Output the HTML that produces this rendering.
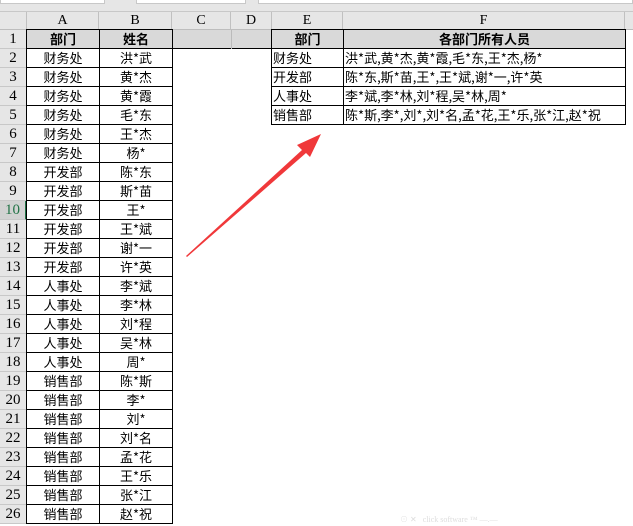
<!DOCTYPE html>
<html><head><meta charset="utf-8"><style>
body{margin:0;width:633px;height:526px;overflow:hidden;background:#fff;position:relative;font-family:"Liberation Serif","Noto Serif CJK SC","Noto Sans CJK SC",serif;font-size:13px;color:#000}
.a{position:absolute;box-sizing:border-box;line-height:18px;white-space:nowrap}
.top{left:0;top:0;width:633px;height:12px;background:#e6e6e6;border-bottom:1px solid #c8c8c8}
.ch{top:12px;height:18px;background:#e6e6e6;border-right:1px solid #c0c0c0;border-bottom:1px solid #bdbdbd;text-align:center;font-size:14px}
.rh{left:0;width:27px;height:19px;background:#e6e6e6;border-right:1px solid #bdbdbd;border-bottom:1px solid #c8c8c8;text-align:center;font-size:15px;font-family:"Liberation Serif",serif}
.c{height:20px;border:1px solid #000;text-align:center;font-family:"Noto Sans CJK SC",sans-serif;font-size:13px;line-height:18px}
.l{text-align:left;padding-left:1px}
.h{background:#d9d9d9;font-weight:bold}
</style></head><body>
<div class="a top"></div>
<div class="a" style="left:0;top:0;width:105px;height:4px;background:#fff;border:1px solid #c8c8c8;border-top:0"></div>
<div class="a" style="left:136px;top:0;width:110px;height:4px;background:#fff;border:1px solid #c8c8c8;border-top:0"></div>
<div class="a" style="left:258px;top:0;width:375px;height:4px;background:#fff;border:1px solid #c8c8c8;border-top:0"></div>
<div class="a ch" style="left:0;width:27px"></div>
<div class="a ch" style="left:27px;width:72px">A</div>
<div class="a ch" style="left:99px;width:73px">B</div>
<div class="a ch" style="left:172px;width:59px">C</div>
<div class="a ch" style="left:231px;width:41px">D</div>
<div class="a ch" style="left:272px;width:71px">E</div>
<div class="a ch" style="left:343px;width:282px">F</div>
<div class="a ch" style="left:625px;width:8px;border-right:0"></div>
<div class="a" style="left:172px;top:30px;width:100px;height:19px;background:#d9d9d9;border-bottom:1px solid #000;border-right:1px solid #bbb"></div>
<div class="a" style="left:231px;top:30px;width:1px;height:19px;background:#bbb"></div>

<div class="a rh" style="top:30px">1</div><div class="a rh" style="top:49px">2</div><div class="a rh" style="top:68px">3</div><div class="a rh" style="top:87px">4</div><div class="a rh" style="top:106px">5</div><div class="a rh" style="top:125px">6</div><div class="a rh" style="top:144px">7</div><div class="a rh" style="top:163px">8</div><div class="a rh" style="top:182px">9</div><div class="a rh" style="top:201px;background:#d2d2d2;color:#217346;border-right:2px solid #217346">10</div><div class="a rh" style="top:220px">11</div><div class="a rh" style="top:239px">12</div><div class="a rh" style="top:258px">13</div><div class="a rh" style="top:277px">14</div><div class="a rh" style="top:296px">15</div><div class="a rh" style="top:315px">16</div><div class="a rh" style="top:334px">17</div><div class="a rh" style="top:353px">18</div><div class="a rh" style="top:372px">19</div><div class="a rh" style="top:391px">20</div><div class="a rh" style="top:410px">21</div><div class="a rh" style="top:429px">22</div><div class="a rh" style="top:448px">23</div><div class="a rh" style="top:467px">24</div><div class="a rh" style="top:486px">25</div><div class="a rh" style="top:505px">26</div>

<div class="a c h" style="left:26px;top:29px;width:74px">部门</div><div class="a c h" style="left:99px;top:29px;width:74px">姓名</div>
<div class="a c" style="left:26px;top:48px;width:74px">财务处</div><div class="a c" style="left:99px;top:48px;width:74px">洪*武</div>
<div class="a c" style="left:26px;top:67px;width:74px">财务处</div><div class="a c" style="left:99px;top:67px;width:74px">黄*杰</div>
<div class="a c" style="left:26px;top:86px;width:74px">财务处</div><div class="a c" style="left:99px;top:86px;width:74px">黄*霞</div>
<div class="a c" style="left:26px;top:105px;width:74px">财务处</div><div class="a c" style="left:99px;top:105px;width:74px">毛*东</div>
<div class="a c" style="left:26px;top:124px;width:74px">财务处</div><div class="a c" style="left:99px;top:124px;width:74px">王*杰</div>
<div class="a c" style="left:26px;top:143px;width:74px">财务处</div><div class="a c" style="left:99px;top:143px;width:74px">杨*</div>
<div class="a c" style="left:26px;top:162px;width:74px">开发部</div><div class="a c" style="left:99px;top:162px;width:74px">陈*东</div>
<div class="a c" style="left:26px;top:181px;width:74px">开发部</div><div class="a c" style="left:99px;top:181px;width:74px">斯*苗</div>
<div class="a c" style="left:26px;top:200px;width:74px">开发部</div><div class="a c" style="left:99px;top:200px;width:74px">王*</div>
<div class="a c" style="left:26px;top:219px;width:74px">开发部</div><div class="a c" style="left:99px;top:219px;width:74px">王*斌</div>
<div class="a c" style="left:26px;top:238px;width:74px">开发部</div><div class="a c" style="left:99px;top:238px;width:74px">谢*一</div>
<div class="a c" style="left:26px;top:257px;width:74px">开发部</div><div class="a c" style="left:99px;top:257px;width:74px">许*英</div>
<div class="a c" style="left:26px;top:276px;width:74px">人事处</div><div class="a c" style="left:99px;top:276px;width:74px">李*斌</div>
<div class="a c" style="left:26px;top:295px;width:74px">人事处</div><div class="a c" style="left:99px;top:295px;width:74px">李*林</div>
<div class="a c" style="left:26px;top:314px;width:74px">人事处</div><div class="a c" style="left:99px;top:314px;width:74px">刘*程</div>
<div class="a c" style="left:26px;top:333px;width:74px">人事处</div><div class="a c" style="left:99px;top:333px;width:74px">吴*林</div>
<div class="a c" style="left:26px;top:352px;width:74px">人事处</div><div class="a c" style="left:99px;top:352px;width:74px">周*</div>
<div class="a c" style="left:26px;top:371px;width:74px">销售部</div><div class="a c" style="left:99px;top:371px;width:74px">陈*斯</div>
<div class="a c" style="left:26px;top:390px;width:74px">销售部</div><div class="a c" style="left:99px;top:390px;width:74px">李*</div>
<div class="a c" style="left:26px;top:409px;width:74px">销售部</div><div class="a c" style="left:99px;top:409px;width:74px">刘*</div>
<div class="a c" style="left:26px;top:428px;width:74px">销售部</div><div class="a c" style="left:99px;top:428px;width:74px">刘*名</div>
<div class="a c" style="left:26px;top:447px;width:74px">销售部</div><div class="a c" style="left:99px;top:447px;width:74px">孟*花</div>
<div class="a c" style="left:26px;top:466px;width:74px">销售部</div><div class="a c" style="left:99px;top:466px;width:74px">王*乐</div>
<div class="a c" style="left:26px;top:485px;width:74px">销售部</div><div class="a c" style="left:99px;top:485px;width:74px">张*江</div>
<div class="a c" style="left:26px;top:504px;width:74px">销售部</div><div class="a c" style="left:99px;top:504px;width:74px">赵*祝</div>

<div class="a c h" style="left:271px;top:29px;width:73px">部门</div><div class="a c h" style="left:343px;top:29px;width:283px">各部门所有人员</div>
<div class="a c l" style="left:271px;top:48px;width:73px">财务处</div><div class="a c l" style="left:343px;top:48px;width:283px">洪*武,黄*杰,黄*霞,毛*东,王*杰,杨*</div>
<div class="a c l" style="left:271px;top:67px;width:73px">开发部</div><div class="a c l" style="left:343px;top:67px;width:283px">陈*东,斯*苗,王*,王*斌,谢*一,许*英</div>
<div class="a c l" style="left:271px;top:86px;width:73px">人事处</div><div class="a c l" style="left:343px;top:86px;width:283px">李*斌,李*林,刘*程,吴*林,周*</div>
<div class="a c l" style="left:271px;top:105px;width:73px">销售部</div><div class="a c l" style="left:343px;top:105px;width:283px">陈*斯,李*,刘*,刘*名,孟*花,王*乐,张*江,赵*祝</div>

<svg class="a" style="left:0;top:0" width="633" height="526">
<polygon points="186,256 302,150 297,145 321,134 310,157 306,153 187,257" fill="#f0383a"/>
</svg>
<div class="a" style="left:400px;top:515px;font-size:8px;color:#ddd;line-height:10px">⊙ ✕ &nbsp; click software ™ —.—</div>
</body></html>
